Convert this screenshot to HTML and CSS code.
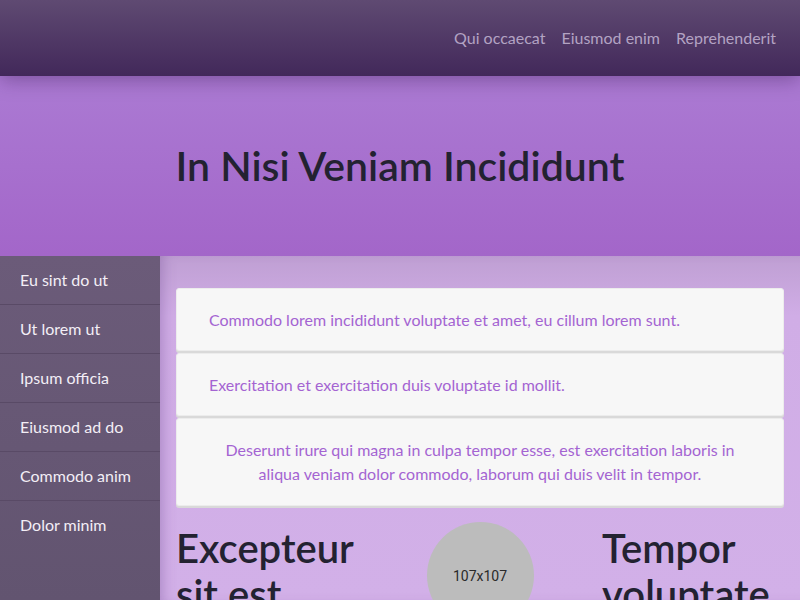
FILE: index.html
```html
<!DOCTYPE html>
<html lang="en">
<head>
<meta charset="utf-8">
<title>In Nisi Veniam Incididunt</title>
<link rel="stylesheet" href="styles.css">
</head>
<body>
<header class="topbar">
  <nav class="topnav">
    <a href="#">Qui occaecat</a>
    <a href="#">Eiusmod enim</a>
    <a href="#">Reprehenderit</a>
  </nav>
</header>
<section class="hero">
  <h1>In Nisi Veniam Incididunt</h1>
</section>
<div class="layout">
  <aside class="sidebar">
    <a href="#">Eu sint do ut</a>
    <a href="#">Ut lorem ut</a>
    <a href="#">Ipsum officia</a>
    <a href="#">Eiusmod ad do</a>
    <a href="#">Commodo anim</a>
    <a href="#">Dolor minim</a>
  </aside>
  <main class="content">
    <div class="cards">
      <div class="card">Commodo lorem incididunt voluptate et amet, eu cillum lorem sunt.</div>
      <div class="card">Exercitation et exercitation duis voluptate id mollit.</div>
      <div class="card card-center">Deserunt irure qui magna in culpa tempor esse, est exercitation laboris in aliqua veniam dolor commodo, laborum qui duis velit in tempor.</div>
    </div>
    <div class="columns">
      <h2>Excepteur sit est</h2>
      <div class="avatar-col"><div class="avatar">107x107</div></div>
      <h2>Tempor voluptate</h2>
    </div>
  </main>
</div>
</body>
</html>
```
FILE: styles.css
```css
* { box-sizing: border-box; }
html, body { margin: 0; padding: 0; }
body {
  font-family: "Lato", "Open Sans", sans-serif;
  width: 800px;
  height: 600px;
  overflow: hidden;
  background: #d2b0e8;
}
.topbar {
  height: 76px;
  background: linear-gradient(#5f4a72, #42285a);
  display: flex;
  justify-content: flex-end;
  align-items: center;
  padding-right: 24px;
  position: relative;
  z-index: 2;
  box-shadow: 0 4px 18px rgba(40, 10, 60, 0.35);
}
.topnav { display: flex; gap: 16px; padding-bottom: 2px; }
.topnav a {
  color: #b3a3c3;
  text-decoration: none;
  font-size: 16px;
}
.hero {
  height: 180px;
  background: linear-gradient(#ab7ad3, #a366c9);
  display: flex;
  align-items: center;
  justify-content: center;
  position: relative;
  z-index: 1;
}
.hero h1 {
  margin: 0;
  font-size: 41px;
  font-weight: 600;
  color: #232231;
  padding-bottom: 2px;
}
.layout {
  display: flex;
  height: 344px;
}
.sidebar {
  width: 160px;
  flex: none;
  background: linear-gradient(#6b5b79, #625470);
  display: flex;
  flex-direction: column;
}
.sidebar a {
  height: 49px;
  padding: 14px 0 0 20px;
  color: #f3eef6;
  text-decoration: none;
  font-size: 16px;
  border-bottom: 1px solid #594a66;
}
.sidebar a:last-child { border-bottom: none; }
.content {
  flex: 1;
  padding: 32px 16px 0 16px;
  background: linear-gradient(#bf9fd3 0px, #d0ade6 60px, #d2b0e8 100%);
  box-shadow: inset 10px 0 14px -8px rgba(120, 80, 150, 0.45);
}
.cards { display: flex; flex-direction: column; gap: 2px; }
.card {
  background: #f7f7f7;
  border: 1px solid #ececec;
  border-radius: 3px;
  box-shadow: 0 2px 0 #d9d9d9;
  padding: 19px 32px 18px;
  color: #a464d2;
  font-size: 16px;
  line-height: 24px;
}
.card-center { text-align: center; padding: 19px 44px 19px; }
.columns {
  display: grid;
  grid-template-columns: 182px 182px 182px;
  column-gap: 31px;
  margin-top: 16px;
}
.columns h2 {
  margin: 0;
  padding-top: 3px;
  font-size: 40px;
  font-weight: 600;
  line-height: 46px;
  color: #232231;
}
.avatar-col { display: flex; justify-content: center; }
.avatar {
  width: 107px;
  height: 107px;
  border-radius: 50%;
  background: #bcbcbc;
  color: #2a2a2a;
  font-family: "Roboto", sans-serif;
  font-size: 14px;
  display: flex;
  align-items: center;
  justify-content: center;
}
```
